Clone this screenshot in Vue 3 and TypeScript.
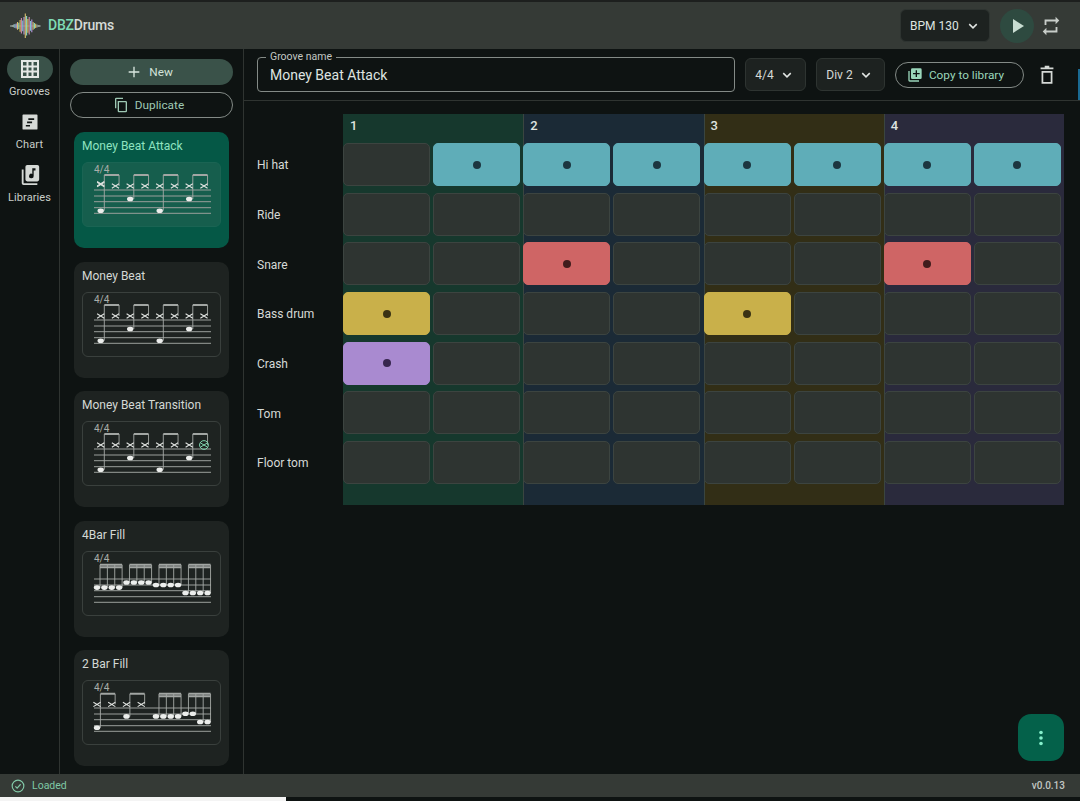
<template>
  <div class="app">
    <header class="topbar">
      <div class="brand">
        <svg class="logo" width="33" height="26" viewBox="0 0 33 26">
          <line x1="1" x2="32" y1="13" y2="13" stroke="#8d9a93" stroke-width="0.7" />
          <line
            v-for="(b, i) in logoBars"
            :key="i"
            :x1="2 + i * 1.3"
            :x2="2 + i * 1.3"
            :y1="13 - b.h"
            :y2="13 + b.h * 0.95"
            :stroke="b.c"
            stroke-width="1.1"
          />
        </svg>
        <span class="brand-name"><b>DBZ</b>Drums</span>
      </div>
      <div class="transport">
        <button class="bpm">
          BPM 130
          <svg width="18" height="18" viewBox="0 0 24 24"><path d="M7 9.5l5 5 5-5" class="chev" /></svg>
        </button>
        <button class="play">
          <svg width="24" height="24" viewBox="0 0 24 24"><path d="M8 5v14l11-7z" fill="#c9ddd2" /></svg>
        </button>
        <button class="icon-btn">
          <svg width="22" height="22" viewBox="0 0 24 24">
            <path fill="#c8cdc9" d="M7 7h10v3l4-4-4-4v3H5v6h2V7zm10 10H7v-3l-4 4 4 4v-3h12v-6h-2v4z" />
          </svg>
        </button>
      </div>
    </header>

    <div class="body">
      <nav class="rail">
        <a class="rail-item active">
          <span class="rail-pill">
            <svg width="24" height="24" viewBox="0 0 24 24">
              <path fill="#e4e8e5" d="M3 3h18v18H3V3zm2 2v3.5h3.5V5H5zm5.5 0v3.5h3V5h-3zm5 0v3.5H19V5h-3.500zM5 10.500v3h3.500v-3H5zm5.500 0v3h3v-3h-3zm5 0v3H19v-3h-3.500zM5 15.500V19h3.500v-3.500H5zm5.500 0V19h3v-3.500h-3zm5 0V19H19v-3.500h-3.500z" />
            </svg>
          </span>
          Grooves
        </a>
        <a class="rail-item">
          <span class="rail-pill">
            <svg width="20" height="20" viewBox="0 0 24 24">
              <path fill="#d5d9d6" d="M4 3h16a1 1 0 0 1 1 1v16a1 1 0 0 1-1 1H4a1 1 0 0 1-1-1V4a1 1 0 0 1 1-1zm6 4.500v2h7v-2h-7zm-1.500 4v2h6v-2h-6zM7 15.500v2h5v-2H7z" />
            </svg>
          </span>
          Chart
        </a>
        <a class="rail-item">
          <span class="rail-pill">
            <svg width="22" height="22" viewBox="0 0 24 24">
              <path fill="#d5d9d6" d="M3 6h2v15h15v2H5a2 2 0 0 1-2-2V6z" />
              <path fill="#d5d9d6" d="M9 1h11a2 2 0 0 1 2 2v14a2 2 0 0 1-2 2H9a2 2 0 0 1-2-2V3a2 2 0 0 1 2-2zm9 3.500h-3.500v6.300a2.500 2.500 0 1 0 1.500 2.200V7h2V4.500z" />
            </svg>
          </span>
          Libraries
        </a>
      </nav>

      <aside class="list">
        <button class="btn-new">
          <svg width="16" height="16" viewBox="0 0 24 24"><path fill="#d9e6df" d="M11 4h2v7h7v2h-7v7h-2v-7H4v-2h7z" /></svg>
          New
        </button>
        <button class="btn-dup">
          <svg width="16" height="16" viewBox="0 0 24 24">
            <path fill="none" stroke="#9ec9b4" stroke-width="2" d="M8 7h11a1 1 0 0 1 1 1v13a1 1 0 0 1-1 1H9a1 1 0 0 1-1-1V7zM4 17V3a1 1 0 0 1 1-1h10" />
          </svg>
          Duplicate
        </button>
        <div class="cards">
          <div v-for="g in sheets" :key="g.name" class="card" :class="{ selected: g.selected }">
            <div class="card-title">{{ g.name }}</div>
            <div class="sheet">
              <svg width="139" height="65" viewBox="0 0 139 65">
                <text x="12" y="10.500" class="sig">4/4</text>
                <line v-for="y in staffLines" :key="y" x1="12" x2="129" :y1="y" :y2="y" class="staff" />
                <line v-for="(s, i) in g.stems" :key="'s' + i" :x1="s.x" :x2="s.x" :y1="s.y1" :y2="s.y2" class="stem" />
                <line v-for="(b, i) in g.beams" :key="'b' + i" :x1="b.x1" :x2="b.x2" :y1="b.y" :y2="b.y" class="beam" />
                <ellipse v-for="(h, i) in g.heads" :key="'h' + i" :cx="h.x" :cy="h.y" rx="3.200" ry="2.300" class="head" />
                <path v-for="(c, i) in g.crosses" :key="'c' + i" :d="crossPath(c.x, c.y)" class="cross" />
                <circle v-if="g.ring" :cx="g.ring.x" :cy="g.ring.y" r="4.400" class="ring" />
                <path v-if="g.ring" :d="crossPath(g.ring.x, g.ring.y)" class="ring-cross" />
              </svg>
            </div>
          </div>
        </div>
      </aside>

      <main class="main">
        <div class="toolbar">
          <label class="name-field">
            <span class="name-label">Groove name</span>
            <input class="name-input" value="Money Beat Attack" />
          </label>
          <button class="select sig-select">
            4/4
            <svg width="18" height="18" viewBox="0 0 24 24"><path d="M7 9.500l5 5 5-5" class="chev" /></svg>
          </button>
          <button class="select div-select">
            Div 2
            <svg width="18" height="18" viewBox="0 0 24 24"><path d="M7 9.500l5 5 5-5" class="chev" /></svg>
          </button>
          <button class="btn-copy">
            <svg width="16" height="16" viewBox="0 0 24 24">
              <path fill="#9ad6ba" d="M2 6h2v14h14v2H4a2 2 0 0 1-2-2V6z" />
              <path fill="#9ad6ba" d="M8 2h12a2 2 0 0 1 2 2v12a2 2 0 0 1-2 2H8a2 2 0 0 1-2-2V4a2 2 0 0 1 2-2zm5 3v4H9v2h4v4h2v-4h4V9h-4V5h-2z" />
            </svg>
            Copy to library
          </button>
          <button class="icon-btn trash">
            <svg width="22" height="22" viewBox="0 0 24 24">
              <path fill="#d5d9d6" d="M9.500 2h5v1.800h4.500v2H5v-2h4.500V2z" />
              <path fill="none" stroke="#d5d9d6" stroke-width="1.900" d="M7 8.500h10V20.500H7z" />
            </svg>
          </button>
        </div>

        <div class="editor">
          <div class="labels">
            <div v-for="t in tracks" :key="t.name" class="track-label">{{ t.name }}</div>
          </div>
          <div class="grid">
            <div v-for="(b, bi) in beats" :key="bi" class="beat" :class="b">
              <div class="beat-num">{{ bi + 1 }}</div>
              <div class="beat-cells">
                <template v-for="t in tracks" :key="t.name">
                  <div
                    v-for="c in 2"
                    :key="c"
                    class="cell"
                    :class="t.hits.includes(bi * 2 + c - 1) ? t.color : ''"
                  >
                    <span v-if="t.hits.includes(bi * 2 + c - 1)" class="dot"></span>
                  </div>
                </template>
              </div>
            </div>
          </div>
        </div>

        <button class="fab">
          <svg width="24" height="24" viewBox="0 0 24 24">
            <circle cx="12" cy="6.500" r="1.800" fill="#86f0cc" />
            <circle cx="12" cy="12" r="1.800" fill="#86f0cc" />
            <circle cx="12" cy="17.500" r="1.800" fill="#86f0cc" />
          </svg>
        </button>
        <div class="edge-sliver"></div>
      </main>
    </div>

    <footer class="status">
      <span class="loaded">
        <svg width="14" height="14" viewBox="0 0 24 24">
          <circle cx="12" cy="12" r="10" fill="none" stroke="#82c9a8" stroke-width="2" />
          <path d="M7.500 12.500l3 3 6-6.500" fill="none" stroke="#82c9a8" stroke-width="2" />
        </svg>
        Loaded
      </span>
      <span class="version">v0.0.13</span>
    </footer>
    <div class="progress"><div class="progress-fill"></div></div>
  </div>
</template>

<script setup lang="ts">
interface Stem { x: number; y1: number; y2: number }
interface Beam { x1: number; x2: number; y: number }
interface Pt { x: number; y: number }
interface Sheet {
  name: string
  selected?: boolean
  stems: Stem[]
  beams: Beam[]
  heads: Pt[]
  crosses: Pt[]
  ring?: Pt
}

const staffLines = [28, 34, 39.7, 45.7, 51.3]

const BASS = 48.7
const SNARE = 37
const HAT = 24
const BEAM = 13

// bars of the waveform logo, tallest in the middle
const logoColors = ['#8fd9c0', '#e6c75a', '#c98ab0', '#7fc4d0', '#b79be0', '#d8c070']
const logoHeights = [0.8, 1, 1.4, 2, 2.6, 4, 3.2, 6, 8, 5.500, 9, 12.500, 10, 7, 9, 5, 6.500, 4, 3, 2.2, 1.500, 1, 0.7]
const logoBars = logoHeights.map((h, i) => ({ h, c: i < 3 || i > 19 ? '#9aa59f' : logoColors[i % logoColors.length] }))

const crossPath = (x: number, y: number) =>
  `M${x - 3.6} ${y - 2.2}L${x + 3.6} ${y + 2.2}M${x - 3.6} ${y + 2.2}L${x + 3.6} ${y - 2.2}`

// the money beat: hats on every eighth, kick on 1 and 3, snare on 2 and 4
function moneyBeat(name: string): Sheet {
  const sheet: Sheet = { name, stems: [], beams: [], heads: [], crosses: [] }
  for (let i = 0; i < 8; i++) {
    const x = 18.7 + i * 14.75
    const stemX = x + 3.6
    const head = i % 4 === 0 ? BASS : i % 4 === 2 ? SNARE : 0
    sheet.crosses.push({ x, y: HAT })
    sheet.stems.push({ x: stemX, y1: BEAM, y2: head ? head : HAT })
    if (head) sheet.heads.push({ x, y: head })
    if (i % 2 === 0) sheet.beams.push({ x1: stemX, x2: stemX + 14.75, y: BEAM })
  }
  return sheet
}

function attack(): Sheet {
  const sheet = moneyBeat('Money Beat Attack')
  sheet.selected = true
  sheet.crosses[0] = { x: 18.7, y: 21.7 }
  sheet.crosses.push({ x: 18.7, y: 22.5 })
  return sheet
}

function transition(): Sheet {
  const sheet = moneyBeat('Money Beat Transition')
  const last = sheet.crosses.pop() as Pt
  sheet.ring = last
  return sheet
}

// four beamed sixteenths with their heads on the given lines
function addSixteenths(sheet: Sheet, start: number, ys: number[]) {
  ys.forEach((y, i) => {
    const x = 15 + (start + i) * 7.37
    sheet.heads.push({ x, y })
    sheet.stems.push({ x: x + 3, y1: 13.8, y2: y })
  })
  const x1 = 15 + start * 7.37 + 3
  const x2 = x1 + (ys.length - 1) * 7.37
  sheet.beams.push({ x1, x2, y: 13.8 }, { x1, x2, y: 16.2 })
}

function fourBar(): Sheet {
  const sheet: Sheet = { name: '4Bar Fill', stems: [], beams: [], heads: [], crosses: [] }
  const lines = [36.6, 31.5, 34, 42]
  lines.forEach((y, n) => addSixteenths(sheet, n * 4, [y, y, y, y]))
  return sheet
}

function twoBar(): Sheet {
  const sheet: Sheet = { name: '2 Bar Fill', stems: [], beams: [], heads: [], crosses: [] }
  for (let i = 0; i < 4; i++) {
    const x = 15 + i * 14.75
    const stemX = x + 3.4
    const head = i === 0 ? 47.7 : i === 2 ? 36.4 : 0
    sheet.crosses.push({ x, y: 24.4 })
    sheet.stems.push({ x: stemX, y1: 13.8, y2: head ? head : 24.4 })
    if (head) sheet.heads.push({ x, y: head })
    if (i % 2 === 0) sheet.beams.push({ x1: stemX, x2: stemX + 14.75, y: 13.8 })
  }
  addSixteenths(sheet, 8, [36.4, 36.4, 36.4, 36.4])
  addSixteenths(sheet, 12, [33.7, 33.7, 42, 42])
  return sheet
}

const sheets: Sheet[] = [attack(), moneyBeat('Money Beat'), transition(), fourBar(), twoBar()]

const beats = ['beat-green', 'beat-blue', 'beat-olive', 'beat-purple']

const tracks = [
  { name: 'Hi hat', color: 'on-teal', hits: [1, 2, 3, 4, 5, 6, 7] },
  { name: 'Ride', color: '', hits: [] as number[] },
  { name: 'Snare', color: 'on-red', hits: [2, 6] },
  { name: 'Bass drum', color: 'on-yellow', hits: [0, 4] },
  { name: 'Crash', color: 'on-purple', hits: [0] },
  { name: 'Tom', color: '', hits: [] as number[] },
  { name: 'Floor tom', color: '', hits: [] as number[] }
]
</script>

<style>
html,
body {
  margin: 0;
  background: #0e1312;
}
</style>

<style scoped>
.app {
  width: 1080px;
  height: 801px;
  display: flex;
  flex-direction: column;
  overflow: hidden;
  background: #0e1312;
  color: #dfe4e0;
  font-family: Roboto, "Liberation Sans", sans-serif;
  font-size: 13px;
  border-top: 2px solid #1d1f1e;
  box-sizing: border-box;
}

button {
  font-family: inherit;
  cursor: pointer;
  padding: 0;
  border: none;
  background: none;
}

.topbar {
  height: 47px;
  flex: none;
  background: #353a36;
  display: flex;
  align-items: center;
  justify-content: space-between;
  padding: 0 18px 0 9px;
}

.brand {
  display: flex;
  align-items: center;
  gap: 6px;
}

.brand-name {
  font-size: 14px;
  letter-spacing: -0.2px;
  font-weight: 500;
  color: #d6dad7;
  position: relative;
  top: -1px;
}

.brand-name b {
  font-weight: 500;
  color: #7fdcb6;
}

.transport {
  display: flex;
  align-items: center;
}

.bpm {
  width: 90px;
  height: 33px;
  box-sizing: border-box;
  display: flex;
  align-items: center;
  justify-content: flex-start;
  gap: 5px;
  padding-left: 9px;
  background: #1d2220;
  border: 1px solid #2e3431;
  border-radius: 6px;
  color: #dfe4e0;
  font-size: 12px;
}

.chev {
  fill: none;
  stroke: #e2e6e3;
  stroke-width: 2;
}

.play {
  width: 34px;
  height: 34px;
  margin-left: 10px;
  border-radius: 50%;
  background: #2e4a40;
  display: flex;
  align-items: center;
  justify-content: center;
}

.icon-btn {
  width: 22px;
  height: 22px;
  margin-left: 6px;
  display: block;
}

.body {
  flex: 1;
  min-height: 0;
  display: flex;
}

.rail {
  width: 60px;
  flex: none;
  box-sizing: border-box;
  border-right: 1px solid #2f3431;
  padding-top: 7px;
  display: flex;
  flex-direction: column;
  gap: 11px;
}

.rail-item {
  display: flex;
  flex-direction: column;
  align-items: center;
  gap: 3px;
  font-size: 11px;
  line-height: 13px;
  letter-spacing: 0.1px;
  color: #c9cec9;
}

.rail-pill {
  width: 46px;
  height: 26px;
  border-radius: 13px;
  display: flex;
  align-items: center;
  justify-content: center;
}

.rail-item.active .rail-pill {
  background: #3a5249;
}

.list {
  width: 184px;
  flex: none;
  box-sizing: border-box;
  border-right: 1px solid #2f3431;
  padding: 10px 10px 0;
  display: flex;
  flex-direction: column;
  overflow: hidden;
}

.btn-new,
.btn-dup {
  height: 26px;
  flex: none;
  border-radius: 13px;
  display: flex;
  align-items: center;
  justify-content: center;
  gap: 6px;
  font-size: 11.800px;
  box-sizing: border-box;
}

.btn-new {
  background: #3a5249;
  color: #d3e2da;
  gap: 7px;
  padding-right: 4px;
}

.btn-dup {
  margin-top: 7px;
  border: 1px solid #838a86;
  color: #9ec9b4;
  padding-right: 6px;
}

.cards {
  margin-top: 14px;
  padding: 0 4px;
  display: flex;
  flex-direction: column;
  gap: 13.500px;
}

.card {
  height: 116px;
  flex: none;
  box-sizing: border-box;
  border-radius: 10px;
  background: #1e2321;
  padding: 6px 8px;
}

.card.selected {
  background: #055846;
}

.card-title {
  font-size: 12px;
  line-height: 17px;
  color: #d4d9d5;
  white-space: nowrap;
}

.card.selected .card-title {
  color: #8fe3c0;
}

.sheet {
  margin-top: 7px;
  height: 65px;
  border: 1px solid #3a403d;
  border-radius: 6px;
  box-sizing: border-box;
  overflow: hidden;
}

.card.selected .sheet {
  border-color: #1a6453;
  background: #165e4d;
}

.sheet svg {
  display: block;
  margin: -1px;
}

.sig {
  font-size: 10px;
  fill: #a9aeaa;
}

.staff {
  stroke: #9a9f9c;
  stroke-width: 1;
}

.stem {
  stroke: #a6aaa7;
  stroke-width: 0.9;
}

.beam {
  stroke: #a2a6a3;
  stroke-width: 2;
}

.head {
  fill: #eceeec;
}

.cross {
  fill: none;
  stroke: #e0e3e0;
  stroke-width: 1.100;
}

.ring {
  fill: none;
  stroke: #7fd6b0;
  stroke-width: 1;
}

.ring-cross {
  fill: none;
  stroke: #7fd6b0;
  stroke-width: 1;
}

.main {
  flex: 1;
  min-width: 0;
  position: relative;
  display: flex;
  flex-direction: column;
}

.toolbar {
  height: 52px;
  flex: none;
  box-sizing: border-box;
  border-bottom: 1px solid #2f3431;
  padding: 0 0 0 13px;
  display: flex;
  align-items: center;
  gap: 10px;
}

.name-field {
  position: relative;
  width: 478px;
  height: 35px;
  flex: none;
  margin-left: 0;
}

.name-label {
  position: absolute;
  left: 9px;
  top: -6px;
  padding: 0 4px;
  font-size: 10.500px;
  line-height: 12px;
  color: #c2c7c3;
  background: #0e1312;
}

.name-input {
  width: 100%;
  height: 100%;
  box-sizing: border-box;
  background: none;
  border: 1px solid #838a86;
  border-radius: 4px;
  padding: 0 12px;
  font-family: inherit;
  font-size: 14px;
  color: #dfe4e0;
  outline: none;
}

.select {
  height: 33px;
  box-sizing: border-box;
  flex: none;
  display: flex;
  align-items: center;
  justify-content: center;
  gap: 4px;
  background: #1d2220;
  border: 1px solid #2e3431;
  border-radius: 6px;
  color: #d6dad7;
  font-size: 12px;
}

.sig-select {
  width: 61px;
}

.div-select {
  width: 69px;
}

.btn-copy {
  width: 129px;
  height: 26px;
  flex: none;
  box-sizing: border-box;
  border: 1px solid #838a86;
  border-radius: 13px;
  display: flex;
  align-items: center;
  justify-content: center;
  gap: 6px;
  padding-right: 8px;
  font-size: 11.800px;
  color: #9ad6ba;
}

.trash {
  margin-left: 2px;
}

.editor {
  display: flex;
  padding: 13px 0 0 13px;
}

.labels {
  width: 86px;
  padding-top: 28px;
  flex: none;
}

.track-label {
  height: 49.700px;
  display: flex;
  align-items: center;
  font-size: 12px;
  color: #d6dad7;
  box-sizing: border-box;
  padding-bottom: 3px;
}

.grid {
  display: flex;
  width: 721px;
}

.beat {
  width: 180.250px;
  height: 391px;
  box-sizing: border-box;
  box-shadow: inset 1px 0 #3a4540;
}

.beat:first-child {
  box-shadow: none;
}

.beat-green {
  background: #16382d;
}

.beat-blue {
  background: #1b2a36;
}

.beat-olive {
  background: #322e16;
}

.beat-purple {
  background: #2a2a3c;
}

.beat-num {
  height: 28px;
  padding-left: 7px;
  font-size: 13px;
  font-weight: 500;
  line-height: 23px;
  color: #dfe4e0;
}

.beat-cells {
  display: grid;
  grid-template-columns: 87px 87px;
  grid-auto-rows: 43px;
  column-gap: 3px;
  row-gap: 6.700px;
  padding-top: 1px;
}

.cell {
  box-sizing: border-box;
  border: 1px solid #3c4440;
  border-radius: 5px;
  background: #2e3431;
  display: flex;
  align-items: center;
  justify-content: center;
}

.dot {
  width: 8px;
  height: 8px;
  border-radius: 50%;
  background: #1c3640;
}

.on-teal {
  background: #5fadb8;
  border-color: #5fadb8;
}

.on-red {
  background: #cf6565;
  border-color: #cf6565;
}

.on-red .dot {
  background: #3f1c1c;
}

.on-yellow {
  background: #c9b04a;
  border-color: #c9b04a;
}

.on-yellow .dot {
  background: #3a3214;
}

.on-purple {
  background: #a98ad0;
  border-color: #a98ad0;
}

.on-purple .dot {
  background: #37264e;
}

.fab {
  position: absolute;
  right: 16px;
  bottom: 13px;
  width: 46px;
  height: 47px;
  border-radius: 13px;
  background: #04614a;
  display: flex;
  align-items: center;
  justify-content: center;
}

.edge-sliver {
  position: absolute;
  right: 0;
  top: 20px;
  width: 2px;
  height: 31px;
  background: #1a6a92;
}

.status {
  height: 23px;
  flex: none;
  background: #353a36;
  display: flex;
  align-items: center;
  justify-content: space-between;
  padding: 0 15px 0 11px;
}

.loaded {
  display: flex;
  align-items: center;
  gap: 7px;
  font-size: 10.500px;
  color: #7fc8a5;
}

.version {
  font-size: 10px;
  font-weight: 500;
  color: #c2c7c3;
}

.progress {
  height: 4px;
  flex: none;
  background: #0e1312;
}

.progress-fill {
  width: 286px;
  height: 100%;
  background: #f4f4f4;
}
</style>
